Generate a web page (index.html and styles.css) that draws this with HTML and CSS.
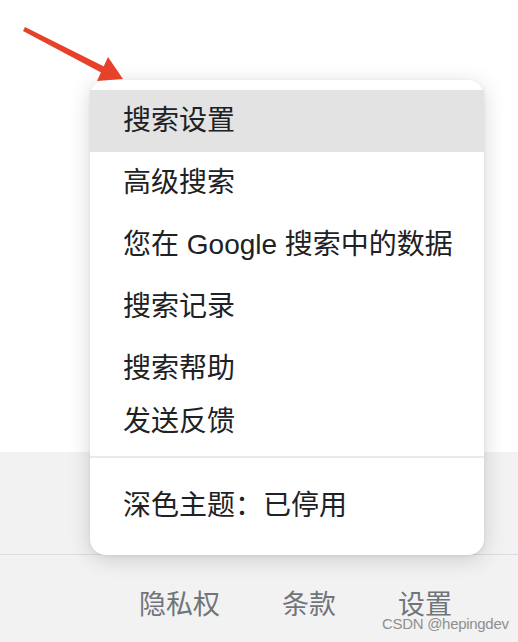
FILE: index.html
```html
<!DOCTYPE html>
<html lang="zh-CN">
<head>
<meta charset="utf-8">
<link rel="stylesheet" href="styles.css">
</head>
<body>
<div class="page">
  <div class="top-area"></div>
  <div class="bottom-area">
    <div class="band"></div>
    <footer class="footer">
      <a class="footer-link">隐私权</a>
      <a class="footer-link">条款</a>
      <a class="footer-link">设置</a>
    </footer>
  </div>

  <nav class="menu">
    <div class="menu-group">
      <div class="item item-active">搜索设置</div>
      <div class="item">高级搜索</div>
      <div class="item">您在 Google 搜索中的数据</div>
      <div class="item">搜索记录</div>
      <div class="item">搜索帮助</div>
      <div class="item item-short">发送反馈</div>
    </div>
    <div class="divider"></div>
    <div class="item item-theme">深色主题：已停用</div>
  </nav>

  <svg class="arrow" width="130" height="90" viewBox="0 0 130 90">
    <path d="M23 31 L25 27 L105 67 L102 73 Z" fill="#e8412b"/>
    <polygon points="108,57 123,79 97,81" fill="#e8412b"/>
  </svg>

  <div class="watermark">CSDN @hepingdev</div>
</div>
</body>
</html>
```

FILE: styles.css
```css
* { box-sizing: border-box; }
html, body { margin: 0; padding: 0; }
body {
  font-family: "Liberation Sans", "Noto Sans CJK SC", sans-serif;
  background: #f2f2f2;
}
.page {
  position: relative;
  width: 518px;
  height: 642px;
  overflow: hidden;
  background: #f2f2f2;
}
.top-area {
  height: 452px;
  background: #ffffff;
}
.bottom-area {
  display: flex;
  flex-direction: column;
}
.band {
  height: 103px;
  border-bottom: 1px solid #dadce0;
}
.footer {
  display: flex;
  gap: 62px;
  padding: 37px 0 0 139px;
}
.footer-link {
  font-size: 27px;
  line-height: 27px;
  color: #70757a;
}
.menu {
  position: absolute;
  left: 90px;
  top: 80px;
  width: 394px;
  height: 475px;
  background: #ffffff;
  border-radius: 16px;
  padding-top: 10px;
  box-shadow: 0 4px 22px rgba(0, 0, 0, 0.16), 0 1px 4px rgba(0,0,0,0.06);
  display: flex;
  flex-direction: column;
}
.item {
  height: 62px;
  display: flex;
  align-items: center;
  padding-left: 33px;
  font-size: 28px;
  line-height: 30px;
  color: #202124;
}
.item-active {
  background: #e3e3e3;
}
.item-short {
  height: 44px;
}
.divider {
  margin-top: 12px;
  height: 2px;
  background: #e8eaed;
}
.item-theme {
  height: 96px;
}
.arrow {
  position: absolute;
  left: 0;
  top: 0;
}
.watermark {
  position: absolute;
  left: 382px;
  top: 616px;
  font-family: "Liberation Sans", sans-serif;
  font-size: 15px;
  line-height: 16px;
  color: #8f8f8f;
  letter-spacing: -0.3px;
}
```
